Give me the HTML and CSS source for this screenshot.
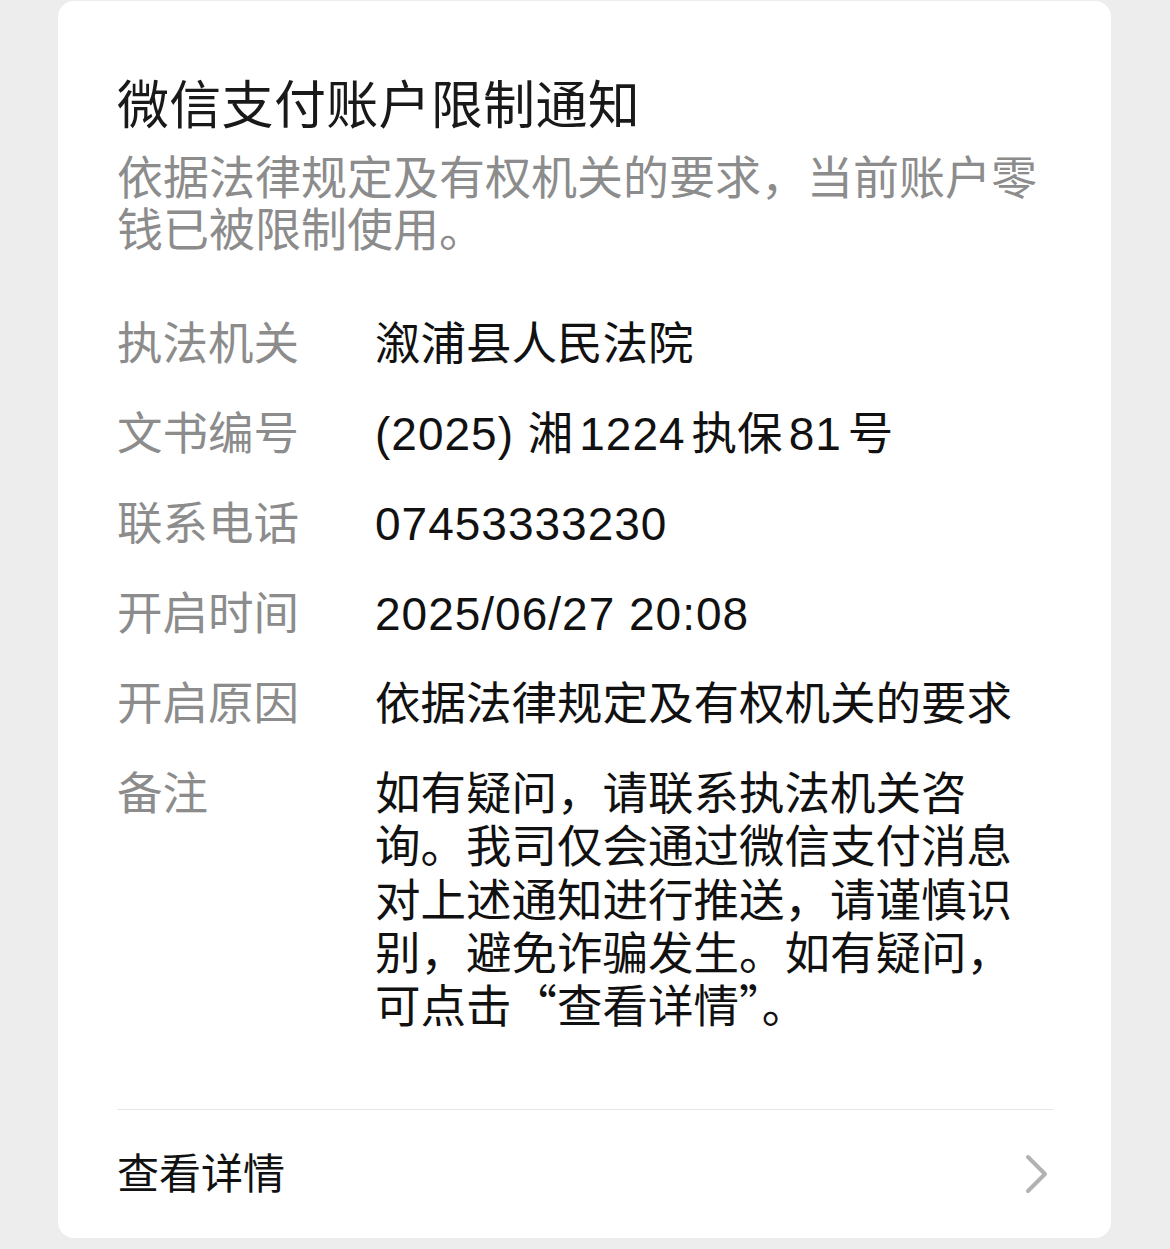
FILE: index.html
```html
<!DOCTYPE html>
<html lang="zh-CN">
<head>
    <meta charset="UTF-8">
    <meta name="viewport" content="width=device-width, initial-scale=1.0">
    <title>微信支付账户限制通知</title>
    <link rel="stylesheet" href="styles.css">
</head>
<body>
    <div class="card">
        <div class="content">
            <h1 class="title">微信支付账户限制通知</h1>
            <p class="desc">依据法律规定及有权机关的要求，当前账户零钱已被限制使用。</p>

            <div class="rows">
                <div class="row">
                    <div class="label">执法机关</div>
                    <div class="value">溆浦县人民法院</div>
                </div>
                <div class="row">
                    <div class="label">文书编号</div>
                    <div class="value"><span class="num">(2025) </span>湘<span class="num gap">1224</span>执保<span class="num gap">81</span>号</div>
                </div>
                <div class="row">
                    <div class="label">联系电话</div>
                    <div class="value"><span class="num">07453333230</span></div>
                </div>
                <div class="row">
                    <div class="label">开启时间</div>
                    <div class="value"><span class="num">2025/06/27 20:08</span></div>
                </div>
                <div class="row">
                    <div class="label">开启原因</div>
                    <div class="value">依据法律规定及有权机关的要求</div>
                </div>
                <div class="row">
                    <div class="label">备注</div>
                    <div class="value note">如有疑问，请联系执法机关咨询。我司仅会通过微信支付消息对上述通知进行推送，请谨慎识别，避免诈骗发生。如有疑问，可点击“查看详情”。</div>
                </div>
            </div>
        </div>

        <div class="footer">
            <span class="link">查看详情</span>
            <svg class="arrow" width="24" height="40" viewBox="0 0 24 40">
                <path d="M3 3 L20 20 L3 37" fill="none" stroke="#b2b2b2" stroke-width="4" stroke-linecap="round" stroke-linejoin="round"/>
            </svg>
        </div>
    </div>
</body>
</html>
```

FILE: styles.css
```css
body {
    margin: 0;
    background-color: #ededed;
    font-family: "Noto Sans CJK SC", "Noto Sans", sans-serif;
    color: #111;
}
.card {
    width: 1053px;
    margin: 1px 0 0 58px;
    height: 1237px;
    box-sizing: border-box;
    background-color: #fff;
    border-radius: 16px;
    padding: 0 58px 0 59px;
    display: flex;
    flex-direction: column;
}
.content {
    flex: 1;
    padding-top: 71px;
}
.title {
    margin: 0;
    font-size: 52px;
    font-weight: 400;
    letter-spacing: 0.3px;
    line-height: 60px;
    color: #191919;
}
.desc {
    margin: 16px 0 0;
    font-size: 46px;
    line-height: 52px;
    color: #8c8c8c;
}
.rows {
    margin-top: 62px;
    display: flex;
    flex-direction: column;
    gap: 37px;
}
.row {
    display: flex;
    font-size: 45.5px;
    line-height: 53px;
}
.label {
    width: 258px;
    flex-shrink: 0;
    color: #8c8c8c;
}
.value {
    flex: 1;
    color: #111;
}
/* digits are drawn in a narrower latin face */
.num {
    font-family: "Liberation Sans", Arial, sans-serif;
    font-size: 46px;
    line-height: 0.9;
    letter-spacing: 1px;
}
.gap {
    margin: 0 6px;
}
.note {
    line-height: 53.3px;
}
.footer {
    height: 129px;
    box-sizing: border-box;
    padding-bottom: 8px;
    border-top: 1px solid #e5e5e5;
    display: flex;
    align-items: center;
    justify-content: space-between;
}
.link {
    font-size: 42px;
    color: #111;
}
.arrow {
    margin: 8px 4px 0 0;
}
```
